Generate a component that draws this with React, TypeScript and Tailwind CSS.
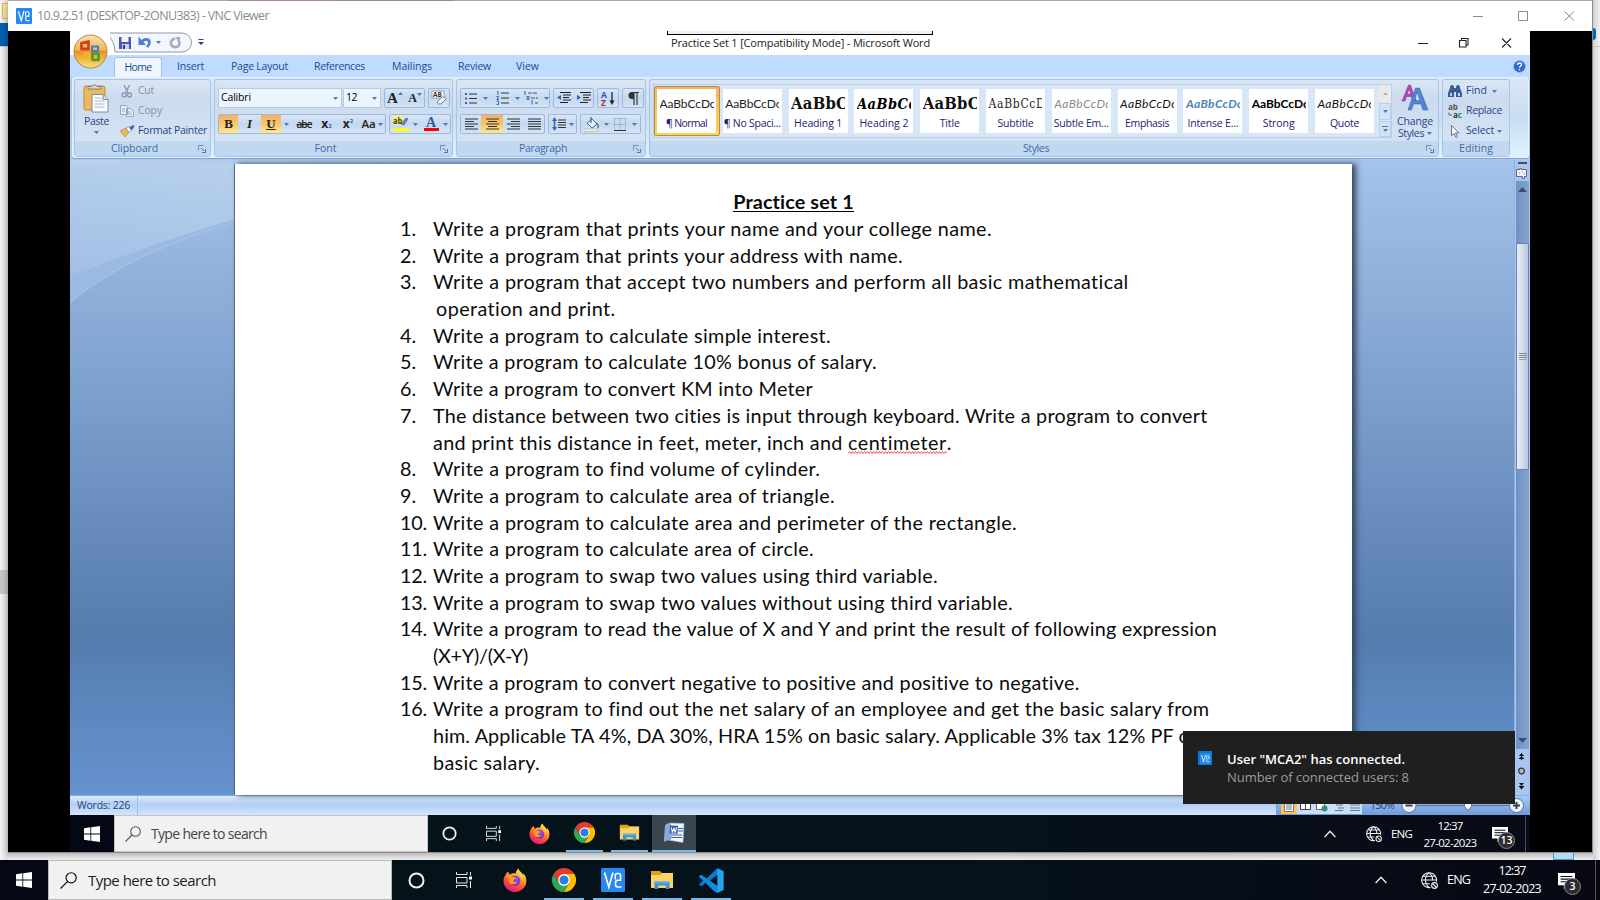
import React, { useLayoutEffect, useRef } from "react";

/** A single line of text whose tracking is computed so that it spans `w` pixels. */
function T({ w, className = "", children }: { w: number; className?: string; children: string }) {
  const ref = useRef<HTMLSpanElement>(null);
  useLayoutEffect(() => {
    const el = ref.current;
    if (!el) return;
    el.style.letterSpacing = "0px";
    const natural = el.getBoundingClientRect().width;
    el.style.letterSpacing = (w - natural) / children.length + "px";
  }, [w, children]);
  return (
    <span ref={ref} className={"inline-block whitespace-pre " + className}>
      {children}
    </span>
  );
}

const UI = "font-['Open_Sans','Noto_Sans',sans-serif]";

function Caret({ className = "" }: { className?: string }) {
  return (
    <svg className={"shrink-0 " + className} width="5" height="3" viewBox="0 0 5 3">
      <path d="M0 0h5L2.500 3z" fill="#4f78b5" />
    </svg>
  );
}

function VncIcon({ size, className = "" }: { size: number; className?: string }) {
  return (
    <svg className={"shrink-0 " + className} width={size} height={size} viewBox="0 0 24 24">
      <rect width="24" height="24" rx="1.500" fill="#2489f0" />
      <path d="M3.500 4.500l4.300 14.500L12 4.500" fill="none" stroke="#fff" strokeWidth="1.700" />
      <path d="M14.300 11.500V7.500q0-2 1.800-2h1.600q1.800 0 1.800 2v4.700h-2.700q-2.300 0-2.300 2.300v2.300q0 2.200 2.300 2.200h3.700" fill="none" stroke="#fff" strokeWidth="1.600" />
    </svg>
  );
}

function Firefox({ size }: { size: number }) {
  return (
    <svg width={size} height={size} viewBox="0 0 24 24">
      <defs>
        <linearGradient id="ffb" x1="0.8" y1="0" x2="0.300" y2="1">
          <stop offset="0" stopColor="#fff44f" />
          <stop offset="0.350" stopColor="#ffa52a" />
          <stop offset="0.650" stopColor="#ff5034" />
          <stop offset="1" stopColor="#e0128e" />
        </linearGradient>
        <radialGradient id="ffc" cx="0.6" cy="0.3" r="0.7">
          <stop offset="0" stopColor="#a24bff" />
          <stop offset="1" stopColor="#5b2fbf" />
        </radialGradient>
      </defs>
      <path d="M15.500 0.500c-2 1.600-2.600 3.200-2.700 5-3-0.800-5 0.200-5.800 1-1.200-0.600-1.600-2-1.500-3C3.800 4.500 3 5.600 2.600 6.700 1.200 8.600 0.500 10.700 0.500 13A11.400 11 0 0 0 23.400 13c0-3.500-1.200-6-3-7.700 0.200 1 0.200 1.500 0 2C19.600 4.600 16 3.500 15.500 0.500z" fill="url(#ffb)" />
      <circle cx="12.300" cy="12.800" r="5" fill="url(#ffc)" />
      <path d="M4 9c2-1.500 5-1.200 6.500 0.300 1.500-0.300 2.500 0.200 3 0.900-1 0.700-2.300 0.800-3 2-0.500 1.500 1.500 2.700 4 1.500-1.500 3.300-7 3.500-8.500 0C5.300 12.500 5.500 11 4 9z" fill="#ff9a24" />
      <path d="M15 5.500c3 1.500 4.500 4.500 3.800 8 2-3 1.200-7-3.800-8z" fill="#ffe14d" />
    </svg>
  );
}

function Chrome({ size }: { size: number }) {
  return (
    <svg width={size} height={size} viewBox="0 0 24 24">
      <path d="M1.600 6A12 12 0 0 0 12 24l5.200-9L12 12 6.800 15z" fill="#2da94f" />
      <path d="M22.400 6A12 12 0 0 1 12 24l5.200-9L12 12V6z" fill="#fdbd00" />
      <path d="M1.600 6L6.800 15 12 12V6h10.400A12 12 0 0 0 1.600 6z" fill="#e33b2e" />
      <circle cx="12" cy="12" r="5.900" fill="#fff" />
      <circle cx="12" cy="12" r="4.600" fill="#2f7de9" />
    </svg>
  );
}

function Explorer({ size }: { size: number }) {
  return (
    <svg width={size} height={size} viewBox="0 0 24 24">
      <path d="M1 3h9l2 2.500H1z" fill="#e5a100" />
      <path d="M1 5h22v15H1z" fill="#fdd26b" />
      <path d="M1 5h11l-1.500 2H1z" fill="#e5a100" />
      <path d="M4.500 21v-7.500h15V21h-3.700v-3.500h-7.500V21z" fill="#3c91d0" />
      <path d="M4.500 13.500h15v1.800h-15z" fill="#5fb2e8" />
    </svg>
  );
}

function WordIcon() {
  return (
    <svg width="22" height="22" viewBox="0 0 22 22">
      <path d="M6 1l15 0.500-1 19L5 18z" fill="#eef3fc" stroke="#9fb3dc" strokeWidth="0.6" />
      <path d="M2 3q3-2.500 6-2v17Q4 18 0.800 20z" fill="#8ea8dd" />
      <path d="M15 6.500h5M15 9h5M8 13h11M8 15.500h11" stroke="#3c5fae" strokeWidth="1.200" />
      <path d="M7 3.500l8 0.300-0.500 8-8-0.300z" fill="#3a5cb0" />
      <path d="M8.300 5.500l1 4.500 1.700-3.500 1 3.500 1.800-4.500" fill="none" stroke="#fff" strokeWidth="1.100" />
    </svg>
  );
}

function VsCode() {
  return (
    <svg width="25" height="25" viewBox="0 0 24 24">
      <path d="M17.500 0.300L23.500 3v18l-6 2.700L7 13.800l-4.600 3.600L0.300 16.300v-1L4 12 0.300 8.700v-1l2.100-1.100L7 10.200z" fill="#0a7ccb" />
      <path d="M17.500 0.300L23.500 3v18l-6 2.700z" fill="#25a4f1" />
      <path d="M17.500 6.800v10.400L10.600 12z" fill="#03131a" />
      <path d="M2.400 6.600L0.300 7.700v1l14.700 14 2.500 1V17.200z" fill="#1489d8" />
    </svg>
  );
}

function WinLogo({ size }: { size: number }) {
  return (
    <svg width={size} height={size} viewBox="0 0 16 16">
      <path d="M0 2.200l6.400-0.900v6.200H0zM7.200 1.200L16 0v7.500H7.200zM0 8.400h6.400v6.300L0 13.800zM7.200 8.400H16V16l-8.800-1.200z" fill="#fff" />
    </svg>
  );
}

function SearchGlyph({ color, size }: { color: string; size: number }) {
  return (
    <svg width={size} height={size} viewBox="0 0 16 16" fill="none" stroke={color} strokeWidth="1.100">
      <circle cx="10.500" cy="5.500" r="4.800" />
      <path d="M7 9L0.500 15.500" />
    </svg>
  );
}

function Cortana({ size }: { size: number }) {
  return (
    <svg width={size} height={size} viewBox="0 0 16 16">
      <circle cx="8" cy="8" r="6.600" fill="none" stroke="#f2f2f2" strokeWidth="1.900" />
    </svg>
  );
}

function TaskView({ size }: { size: number }) {
  return (
    <svg width={size} height={size} viewBox="0 0 16 16" fill="none" stroke="#e8e8e8" strokeWidth="1">
      <path d="M0.500 0v2.500h10.500V0M0.500 16v-2.500h10.500V16M0.500 5.500h10.500v5.500H0.500zM14.500 0v3.500M14.500 9v7" />
      <path d="M13 4.500h3v3h-3z" fill="#fff" stroke="none" />
    </svg>
  );
}

function Globe({ size }: { size: number }) {
  return (
    <svg width={size} height={size} viewBox="0 0 16 16" fill="none" stroke="#eee" strokeWidth="1.050">
      <path d="M9 14.600A7 7 0 1 1 14.500 9M0.700 7.500h14M1.800 4h11.500M1.800 11h6.500M7.500 0.600c-4.500 4-4.500 10 0 14M7.500 0.600c2.500 2 3.500 5 3.400 7.400" />
      <circle cx="12.700" cy="12.700" r="2.700" />
      <path d="M11 11l3.600 3.600" />
    </svg>
  );
}

function Notif({ size, n }: { size: number; n: string }) {
  return (
    <div className="relative shrink-0">
      <svg width={size} height={size} viewBox="0 0 16 16">
        <path d="M0 1h16v11.500H9L5.500 16v-3.500H0z" fill="#fff" />
        <path d="M2.500 4.200h11M2.500 6.700h11M2.500 9.200h7" stroke="#0a0c14" strokeWidth="1" />
      </svg>
      <div className="absolute left-[6px] top-[6px] flex h-[17px] w-[17px] items-center justify-center rounded-full border border-[#8a8a8a] bg-[#2b2b30] text-[10.500px] font-semibold leading-none text-white">
        {n}
      </div>
    </div>
  );
}

function Up() {
  return (
    <svg width="12" height="8" viewBox="0 0 12 8" fill="none" stroke="#eee" strokeWidth="1.300">
      <path d="M0.600 7L6 1.300 11.400 7" />
    </svg>
  );
}

/* ---------- Ribbon ---------- */

function Launcher() {
  return (
    <svg width="8" height="8" viewBox="0 0 8 8" fill="none" stroke="#6c91c2" strokeWidth="1">
      <path d="M0.500 5.500v-5h5" />
      <path d="M3 3l3 3" stroke="#54759f" />
      <path d="M4 7.500h3.500V4" stroke="#54759f" />
    </svg>
  );
}

function Group({ className, label, lw, launcher = true, children }: { className: string; label: string; lw: number; launcher?: boolean; children: React.ReactNode }) {
  return (
    <div className={"flex h-[78px] shrink-0 flex-col overflow-hidden rounded-[3px] border border-[#a9c5e6] bg-linear-to-b from-[#dbe6f4] from-0% via-[#cbdbee] via-25% to-[#d8e6f6] " + className}>
      <div className="h-[61px]">{children}</div>
      <div className="flex h-[15px] items-center bg-[#c1d8f0]">
        <div className="flex flex-1 justify-center text-[10.500px] leading-[15px] text-[#3e6aaa]">
          <T w={lw}>{label}</T>
        </div>
        {launcher && <div className="flex w-[16px] justify-center pr-px"><Launcher /></div>}
      </div>
    </div>
  );
}

const box = "flex h-[20px] shrink-0 items-center rounded-[2px] border border-[#9bb8de] bg-linear-to-b from-[#d8e6f7] via-[#c4d8f0] to-[#d5e4f6] ";

function Cell({ className, on = false, children }: { className: string; on?: boolean; children: React.ReactNode }) {
  return (
    <div className={"flex h-[18px] shrink-0 items-center justify-center gap-[4px] " + (on ? "bg-linear-to-b from-[#f6b15c] via-[#fcc46d] to-[#fde98f] " : "") + className}>
      {children}
    </div>
  );
}

function Lines({ d }: { d: string }) {
  return (
    <svg width="13" height="13" viewBox="0 0 13 13" fill="none" stroke="#333" strokeWidth="1.100">
      <path d={d} />
    </svg>
  );
}

function Clipboard() {
  return (
    <div className="flex h-full pl-[1px]">
      <div className="flex w-[41px] shrink-0 flex-col items-center pt-[4px] text-[10.500px] leading-[14px] text-[#1f4788]">
        <svg width="27" height="29" viewBox="0 0 27 29">
          <rect x="1" y="2" width="21" height="24" rx="2" fill="#edb95a" stroke="#c48a35" />
          <path d="M5 5h13V2.500h-4Q11.500-1 9 2.500H5z" fill="#d4d8de" stroke="#777" strokeWidth="0.900" />
          <path d="M9 10.500h11l5 5V28H9z" fill="#fdfdff" stroke="#7c8ba5" />
          <path d="M11.500 14h7M11.500 17h10M11.500 20h10M11.500 23h10" stroke="#a8b6cf" />
          <path d="M20 10.500v5h5" fill="#d5def0" stroke="#7c8ba5" />
        </svg>
        <div className="mt-px"><T w={25}>Paste</T></div>
        <Caret className="mt-[3px]" />
      </div>
      <div className="flex shrink-0 flex-col pl-[3px] pt-[1px] text-[10.500px]">
        <div className="flex h-[20px] items-center gap-[5px] pl-[1px] text-[#8d929b]">
          <svg width="12" height="13" viewBox="0 0 12 13" fill="none" stroke="#8598b3" strokeWidth="1.300"><path d="M3 0l4 8M8.500 0L4.500 8" /><circle cx="3" cy="10" r="2" /><circle cx="8.500" cy="10" r="2" /></svg>
          <T w={16}>Cut</T>
        </div>
        <div className="flex h-[20px] items-center gap-[4px] text-[#8d929b]">
          <svg width="14" height="12" viewBox="0 0 14 12" fill="#e8eef7" stroke="#94a8c4"><path d="M0.500 0.500h5l2 2v7h-7zM6.500 3.500h4l3 3v5h-7z" /><path d="M8 7h3M8 9h4M2 4h3M2 6h3" /></svg>
          <T w={24}>Copy</T>
        </div>
        <div className="flex h-[20px] items-center gap-[3px] text-[#1f4788]">
          <svg width="15" height="12" viewBox="0 0 15 12"><path d="M0 6l6-3 3 4-4 5z" fill="#e5bc55" stroke="#a88830" strokeWidth="0.6" /><path d="M6 3l3-1.500 2.500 3-2.500 3z" fill="#fff" stroke="#777" strokeWidth="0.6" /><path d="M9 2.500l4-2.500 1.500 1.500-3 4z" fill="#4a5fae" /></svg>
          <T w={69}>Format Painter</T>
        </div>
      </div>
    </div>
  );
}

function FontGroup() {
  const serif = "font-['Liberation_Serif',serif] font-bold text-[#222]";
  return (
    <div className="flex h-full flex-col gap-[6px] pl-[3px] pt-[8px]">
      <div className="flex h-[20px] items-center">
        <div className="flex h-[20px] w-[124px] items-center justify-between border border-[#b5cbe8] bg-[#ecf4fd] px-[2px] text-[10.500px] text-black"><T w={30}>Calibri</T><Caret className="mr-[1px]" /></div>
        <div className="ml-[1px] flex h-[20px] w-[38px] items-center justify-between border border-[#b5cbe8] bg-[#ecf4fd] px-[2px] text-[10.500px] text-black"><T w={11}>12</T><Caret className="mr-[1px]" /></div>
        <div className={box + "ml-[3px] w-[41px]"}>
          <Cell className={"w-[20px] text-[15px] leading-none " + serif}><span className="flex">A<Caret className="mt-[1px] rotate-180" /></span></Cell>
          <Cell className={"w-[20px] text-[12px] leading-none " + serif}><span className="flex items-end">A<Caret className="mb-[8px]" /></span></Cell>
        </div>
        <div className={box + "ml-[3px] w-[22px] justify-center"}>
          <svg width="16" height="16" viewBox="0 0 16 16"><rect x="1" y="1" width="12" height="7" fill="#fff" stroke="#777" strokeWidth="0.7" /><text x="2" y="7" fontSize="6.500" fontWeight="bold" fill="#333">AB</text><path d="M6 12l5-5q3-1 4 2l-5 5q-4 1-4-2z" fill="#f1f4fb" stroke="#6e7d9b" strokeWidth="0.900" /></svg>
        </div>
      </div>
      <div className="flex h-[20px] items-center">
        <div className={box + "w-[168px] text-[#222]"}>
          <Cell on className={"w-[19px] text-[13px] " + serif}>B</Cell>
          <Cell className="w-[23px] font-['Liberation_Serif',serif] text-[13px] font-bold italic">I</Cell>
          <Cell on className={"w-[20px] text-[13px] underline " + serif}>U</Cell>
          <Cell className="w-[11px]"><Caret /></Cell>
          <Cell className="w-[24px] text-[10px] font-semibold line-through"><T w={15}>abe</T></Cell>
          <Cell className="w-[21px] text-[12px] font-bold"><span className="flex leading-none">x<span className="mt-[5px] text-[6px] text-[#2f5fb5]">2</span></span></Cell>
          <Cell className="w-[22px] text-[12px] font-bold"><span className="flex leading-none">x<span className="text-[6px] text-[#2f5fb5]">2</span></span></Cell>
          <Cell className="w-[26px] text-[11.500px] font-semibold"><span className="flex items-center gap-[2px]"><T w={14}>Aa</T><Caret /></span></Cell>
        </div>
        <div className={box + "ml-[3px] w-[62px]"}>
          <Cell className="w-[31px]">
            <svg width="16" height="16" viewBox="0 0 16 16"><rect x="0" y="0" width="10" height="9" fill="#fbf36b" /><text x="0" y="8" fontSize="9" fontWeight="bold" fill="#333" textLength="9" lengthAdjust="spacingAndGlyphs">ab</text><path d="M8 8l5-6 2 1-4 6z" fill="#6f88b8" stroke="#445" strokeWidth="0.5" /><rect x="0" y="12" width="16" height="3" fill="#ff0" /></svg>
            <Caret />
          </Cell>
          <Cell className="w-[29px]">
            <svg width="15" height="16" viewBox="0 0 15 16"><text x="2" y="11" fontSize="14" fontWeight="bold" fontFamily="Liberation Serif" fill="#33589c">A</text><rect x="0" y="12" width="15" height="3" fill="#f00" /></svg>
            <Caret />
          </Cell>
        </div>
      </div>
    </div>
  );
}

function ParagraphGroup() {
  return (
    <div className="flex h-full flex-col gap-[6px] pl-[3px] pt-[8px]">
      <div className="flex h-[20px] items-center">
        <div className={box + "w-[90px]"}>
          <Cell className="w-[31px] gap-[6px]">
            <svg width="12" height="13" viewBox="0 0 12 13"><path d="M4 2h8M4 6.500h8M4 11h8" stroke="#333" /><path d="M0 1h2v2H0zM0 5.500h2v2H0zM0 10h2v2H0z" fill="#3465b5" /></svg><Caret />
          </Cell>
          <Cell className="w-[31px] gap-[6px]">
            <svg width="13" height="14" viewBox="0 0 13 14"><path d="M5 2h8M5 7h8M5 12h8" stroke="#333" /><path d="M1 0.500h1V4M0.500 5.500h2L1 8.500h2M0.500 10h2v3.500h-2" fill="none" stroke="#3465b5" /></svg><Caret />
          </Cell>
          <Cell className="w-[26px] gap-[1px]">
            <svg width="17" height="14" viewBox="0 0 17 14"><path d="M5 2h10M8 7h7M12 12h3" stroke="#555" strokeDasharray="4 1" /><path d="M1 0.500h1V4M4 5.500h2v3H4zM9 9v4.500" fill="none" stroke="#3465b5" /></svg><Caret />
          </Cell>
        </div>
        <div className={box + "ml-[3px] w-[41px]"}>
          <Cell className="w-[20px]"><svg width="14" height="12" viewBox="0 0 14 12"><path d="M3 0.500h11M6 3h8M6 5.500h6M6 8h8M3 10.500h8" stroke="#222" strokeWidth="1.200" /><path d="M4 3v5L0 5.500z" fill="#3465b5" /></svg></Cell>
          <Cell className="w-[20px]"><svg width="14" height="12" viewBox="0 0 14 12"><path d="M3 0.500h11M6 3h8M6 5.500h6M6 8h8M3 10.500h8" stroke="#222" strokeWidth="1.200" /><path d="M0 3v5l4-2.500z" fill="#3465b5" /></svg></Cell>
        </div>
        <div className={box + "ml-[3px] w-[22px] justify-center"}>
          <svg width="15" height="15" viewBox="0 0 15 15" fill="none"><text x="0" y="7" fontSize="8.500" fontWeight="bold" fill="#2f5fb5">A</text><text x="0" y="14.500" fontSize="8.500" fontWeight="bold" fill="#a33">Z</text><path d="M11 1v10" stroke="#222" strokeWidth="1.300" /><path d="M8.500 9.500h5L11 14z" fill="#222" /></svg>
        </div>
        <div className={box + "ml-[3px] w-[22px] justify-center"}>
          <svg width="11" height="13" viewBox="0 0 11 13"><path d="M5 0.500h6M6 0.500V13M9 0.500V13" stroke="#333" strokeWidth="1.200" /><path d="M6 0H4Q0.500 0.300 0.500 3.500T4 7h2z" fill="#333" /></svg>
        </div>
      </div>
      <div className="flex h-[20px] items-center">
        <div className={box + "w-[85px]"}>
          <Cell className="w-[20px]"><Lines d="M0 1h13M0 3.500h9M0 6h13M0 8.500h9M0 11h13" /></Cell>
          <Cell on className="w-[22px]"><Lines d="M0 1h13M2 3.500h9M0 6h13M2 8.500h9M0 11h13" /></Cell>
          <Cell className="w-[21px]"><Lines d="M0 1h13M4 3.500h9M0 6h13M4 8.500h9M0 11h13" /></Cell>
          <Cell className="w-[20px]"><Lines d="M0 1h13M0 3.500h13M0 6h13M0 8.500h13M0 11h13" /></Cell>
        </div>
        <div className={box + "ml-[3px] w-[29px] justify-center gap-[2px]"}>
          <svg width="15" height="14" viewBox="0 0 15 14"><path d="M6 3h8M6 5.500h8M6 8h8M6 10.500h8" stroke="#333" /><path d="M0 4l2.500-4L5 4H3.300v6H5l-2.500 4L0 10h1.700V4z" fill="#3465b5" /></svg><Caret />
        </div>
        <div className={box + "ml-[3px] w-[61px]"}>
          <Cell className="w-[30px]">
            <svg width="16" height="15" viewBox="0 0 16 15"><path d="M3 6l5-4 5 5-5 4z" fill="#e8eef8" stroke="#53688f" /><path d="M7 0v6M12 6q3 1 2 5" stroke="#53688f" strokeWidth="1.300" fill="none" /><path d="M0 12h14v2.500H0z" fill="#f6f1df" stroke="#999" strokeWidth="0.500" /></svg><Caret />
          </Cell>
          <Cell className="w-[29px] gap-[6px]">
            <svg width="12" height="13" viewBox="0 0 12 13" fill="none" stroke="#8291ab"><path d="M0.500 0.500h11v12M0.500 0.500v12M6 0.500v12M0.500 6.500h11" strokeDasharray="1 1" /><path d="M0 12.500h12" stroke="#333" /></svg><Caret />
          </Cell>
        </div>
      </div>
    </div>
  );
}

const STYLES = [
  { s: "AaBbCcDc", n: "¶ Normal", w: 41, c: "font-['Lato',sans-serif] text-[12px] text-[#222]", sw: 56 },
  { s: "AaBbCcDc", n: "¶ No Spaci...", w: 57, c: "font-['Lato',sans-serif] text-[12px] text-[#222]", sw: 56 },
  { s: "AaBbC", n: "Heading 1", w: 48, c: "font-['DejaVu_Serif_Condensed','DejaVu_Serif',serif] text-[16.500px] font-bold text-[#111]", sw: 57 },
  { s: "AaBbCc", n: "Heading 2", w: 49, c: "font-['DejaVu_Serif_Condensed','DejaVu_Serif',serif] text-[14.500px] font-bold italic text-black", sw: 60 },
  { s: "AaBbC", n: "Title", w: 20, c: "font-['DejaVu_Serif_Condensed','DejaVu_Serif',serif] text-[16.500px] font-bold text-[#111]", sw: 57 },
  { s: "AaBbCcD", n: "Subtitle", w: 36, c: "font-['DejaVu_Serif_Condensed','DejaVu_Serif',serif] text-[12px] text-[#222]", sw: 57 },
  { s: "AaBbCcDc", n: "Subtle Em...", w: 55, c: "font-['Lato',sans-serif] text-[12px] italic text-[#8a8a8a]", sw: 57 },
  { s: "AaBbCcDc", n: "Emphasis", w: 44, c: "font-['Lato',sans-serif] text-[12px] italic text-[#111]", sw: 57 },
  { s: "AaBbCcDc", n: "Intense E...", w: 51, c: "font-['Lato',sans-serif] text-[12px] font-bold italic text-[#4f81bd]", sw: 57 },
  { s: "AaBbCcDc", n: "Strong", w: 32, c: "font-['Lato',sans-serif] text-[12px] font-bold text-black", sw: 57 },
  { s: "AaBbCcDc", n: "Quote", w: 29, c: "font-['Lato',sans-serif] text-[12px] italic text-[#111]", sw: 57 },
];

function StylesGroup() {
  return (
    <div className="flex h-full pl-[3px] pt-[4px]">
      <div className="flex h-[54px] w-[739px] border border-[#b7cfec] bg-[#d8e7f8]">
        <div className="flex w-[725px] items-start pt-px">
          {STYLES.map((st, i) => (
            <div key={i} className={"flex h-[50px] w-[65.800px] shrink-0 " + (i === 0 ? "rounded-[2px] border border-[#b98a4a] bg-linear-to-b from-[#f3b56c] to-[#fbd64f] p-[2px]" : "p-[3px]")}>
              <div className="flex h-[44px] w-[59px] flex-col items-center bg-white">
                <div className="mt-[3px] flex h-[24px] w-[54px] items-center overflow-hidden">
                  <T w={st.sw} className={"leading-[24px] " + st.c}>{st.s}</T>
                </div>
                <div className="flex h-[15px] justify-center whitespace-nowrap text-[10.500px] leading-[15px] text-[#1b2170]">
                  <T w={st.w}>{st.n}</T>
                </div>
              </div>
            </div>
          ))}
        </div>
        <div className="flex w-[12px] flex-col gap-[1px]">
          <div className="flex h-[17px] items-center justify-center bg-[#eceae8]"><svg width="5" height="3" viewBox="0 0 5 3"><path d="M0 3h5L2.500 0z" fill="#b0b0b0" /></svg></div>
          <div className="flex h-[17px] items-center justify-center border border-[#b7cfec] bg-[#d3e2f8]"><Caret /></div>
          <div className="flex h-[16px] flex-col items-center justify-center gap-[2px] border border-[#b7cfec] bg-[#d3e2f8]"><div className="h-px w-[6px] bg-[#4f78b5]" /><Caret /></div>
        </div>
      </div>
      <div className="flex w-[46px] flex-col items-center text-[10.500px] leading-[12px] text-[#1f4788]">
        <svg width="28" height="28" viewBox="0 0 28 28">
          <path d="M1 17L7.500 1h2L15 17h-3l-1.500-4.500H5.500L4 17zM6.200 10h3.600L8.200 5z" fill="#b548b5" stroke="#7d3291" strokeWidth="0.500" />
          <path d="M7 26L14.500 4h4L27 26h-5l-2-6h-7.500l-2 6zM13.500 16.500h5.500L16.200 8z" fill="#4f86d6" stroke="#345f9f" strokeWidth="0.500" />
        </svg>
        <div className="mt-[3px]"><T w={36}>Change</T></div>
        <div className="flex items-center gap-[3px]"><T w={26}>Styles</T><Caret /></div>
      </div>
    </div>
  );
}

function EditingGroup() {
  return (
    <div className="flex h-full flex-col pl-[5px] pt-[1px] text-[10.500px] text-[#1f4788]">
      <div className="flex h-[20px] items-center gap-[4px]">
        <svg width="14" height="12" viewBox="0 0 14 12"><path d="M2 3q0-3 2-3t2 3h2q0-3 2-3t2 3l2 5v4H8V7H6v5H0V8z" fill="#3c5c93" /><path d="M2 8h2v3H2zM10 8h2v3h-2z" fill="#b8cdf0" /></svg>
        <T w={21}>Find</T><Caret className="ml-px" />
      </div>
      <div className="flex h-[20px] items-center gap-[3px]">
        <svg width="15" height="14" viewBox="0 0 15 14"><text x="0" y="6" fontSize="8" fontWeight="bold" fill="#555">ab</text><text x="5" y="13.500" fontSize="8" fontWeight="bold" fill="#333">a<tspan fill="#2c8f3a">c</tspan></text><path d="M1 8.500v2.500h3" stroke="#3465b5" fill="none" /></svg>
        <T w={36}>Replace</T>
      </div>
      <div className="flex h-[20px] items-center gap-[6px] pl-[3px]">
        <svg width="9" height="13" viewBox="0 0 9 13"><path d="M0.500 0.500v10l2.500-2 2 4 1.500-0.800L4.500 8h3.500z" fill="#fff" stroke="#53688f" strokeWidth="0.900" /></svg>
        <T w={28}>Select</T><Caret className="-ml-[3px]" />
      </div>
    </div>
  );
}

/* ---------- Document ---------- */

type Line = { n?: string; t: string; w: number; indent?: boolean };
const DOC: Line[] = [
  { n: "1.", t: "Write a program that prints your name and your college name.", w: 559 },
  { n: "2.", t: "Write a program that prints your address with name.", w: 470 },
  { n: "3.", t: "Write a program that accept two numbers and perform all basic mathematical", w: 696 },
  { t: "operation and print.", w: 180, indent: true },
  { n: "4.", t: "Write a program to calculate simple interest.", w: 398 },
  { n: "5.", t: "Write a program to calculate 10% bonus of salary.", w: 444 },
  { n: "6.", t: "Write a program to convert KM into Meter", w: 380 },
  { n: "7.", t: "The distance between two cities is input through keyboard. Write a program to convert", w: 775 },
  { t: "and print this distance in feet, meter, inch and ", w: 415 },
  { n: "8.", t: "Write a program to find volume of cylinder.", w: 387 },
  { n: "9.", t: "Write a program to calculate area of triangle.", w: 402 },
  { n: "10.", t: "Write a program to calculate area and perimeter of the rectangle.", w: 584 },
  { n: "11.", t: "Write a program to calculate area of circle.", w: 381 },
  { n: "12.", t: "Write a program to swap two values using third variable.", w: 505 },
  { n: "13.", t: "Write a program to swap two values without using third variable.", w: 580 },
  { n: "14.", t: "Write a program to read the value of X and Y and print the result of following expression", w: 784 },
  { t: "(X+Y)/(X-Y)", w: 95 },
  { n: "15.", t: "Write a program to convert negative to positive and positive to negative.", w: 648 },
  { n: "16.", t: "Write a program to find out the net salary of an employee and get the basic salary from", w: 776 },
  { t: "him. Applicable TA 4%, DA 30%, HRA 15% on basic salary. Applicable 3% tax 12% PF on", w: 768 },
  { t: "basic salary.", w: 107 },
];

function DocumentArea() {
  return (
    <div className="relative flex h-[631px] bg-linear-to-b from-[#a4c2ea] from-0% via-[#557cae] via-75% to-[#6593cf]">
      <svg className="absolute left-0 top-0" width="165" height="150" viewBox="0 0 165 150">
        <defs>
          <linearGradient id="sky" x1="0.4" y1="0" x2="0.2" y2="1">
            <stop offset="0" stopColor="#b5cfec" />
            <stop offset="1" stopColor="#a3bfe5" />
          </linearGradient>
        </defs>
        <path d="M0 0h165v58Q60 90 0 139z" fill="#9cbae1" />
        <path d="M165 58.500Q60 88 0 138.500" fill="none" stroke="#a5c0e3" strokeWidth="1.500" />
        <path d="M0 0h165v55Q80 80 0 113z" fill="url(#sky)" />
      </svg>
      <div className="w-[164px] shrink-0" />
      <div className="relative h-[631px] w-[1118px] shrink-0 border-l border-[#5f6a78] bg-white pl-[165px] pt-[24px] font-['Lato',sans-serif] text-[19.800px] text-[#0c0c0c] shadow-[4px_0_6px_0px_#33465f]">
        <div className="flex h-[27px] w-[787px] justify-center font-bold leading-[27px]">
          <T w={121} className="h-[24px] border-b-[1.500px] border-black leading-[27px]">Practice set 1</T>
        </div>
        {DOC.map((l, i) => (
          <div key={i} className="flex h-[26.700px] leading-[27px]">
            <div className="w-[33px] shrink-0">{l.n && <T w={l.n.length === 3 ? 27 : 16}>{l.n}</T>}</div>
            <div className={"flex shrink-0 whitespace-pre " + (l.indent ? "pl-[3px]" : "")}>
              <T w={l.w}>{l.t}</T>
              {i === 8 && (
                <span className="flex">
                  <span className="relative">
                    <T w={99}>centimeter</T>
                    <svg className="absolute left-0 top-[22px]" width="99" height="3" viewBox="0 0 99 3"><path d={"M0 2.500" + Array.from({ length: 33 }, () => "l1.500-2l1.500 2").join("")} fill="none" stroke="#f22" strokeWidth="0.800" /></svg>
                  </span>
                  .
                </span>
              )}
            </div>
          </div>
        ))}
      </div>
      <div className="flex-1" />
      <div className="relative -mt-[4px] flex w-[16px] flex-col items-center border-l border-[#8fb2e2] bg-[#a6c5f1]">
        <div className="mt-[2px] h-[2px] w-[9px] shrink-0 bg-[#454d66]" />
        <svg className="mr-px mt-[4px] shrink-0" width="12" height="11" viewBox="0 0 12 11"><path d="M0.500 1.500h3v-1h2v1h5v7h-2v2h-2v-2h-6z" fill="#f3f0f5" stroke="#5b6680" /><path d="M3 5h1M6 4h1M8 6h1" stroke="#a07a8a" /></svg>
        <div className="mt-[2px] flex h-[568px] w-[13px] shrink-0 flex-col items-center bg-linear-to-r from-[#6f92c2] to-[#84a4d0]">
          <svg className="mt-[6px] shrink-0" width="9" height="5" viewBox="0 0 9 5"><path d="M0 5h9L4.500 0z" fill="#424a72" /></svg>
          <div className="mt-[51px] flex h-[227px] w-[13px] shrink-0 flex-col items-center justify-center gap-px rounded-[1px] border border-[#6b82ae] bg-linear-to-r from-[#e9eef6] via-[#d3dcea] to-[#b7c7df]">
            <div className="h-px w-[8px] bg-[#7d8b97]" />
            <div className="h-px w-[8px] bg-[#7d8b97]" />
            <div className="h-px w-[8px] bg-[#7d8b97]" />
            <div className="h-px w-[8px] bg-[#9aa8b4]" />
          </div>
          <div className="flex-1" />
          <svg className="mb-[6px] shrink-0" width="9" height="5" viewBox="0 0 9 5"><path d="M0 0h9L4.500 5z" fill="#424a72" /></svg>
        </div>
        <svg className="mr-[2px] mt-[4px] shrink-0" width="7" height="37" viewBox="0 0 7 37"><path d="M3.500 0L6 3H1zM3.500 3L6.500 6h-6zM3 5h1v2H3zM1 30h5l-2.500 3zM0.500 33h6l-3 3.500z" fill="#111" /><circle cx="3.500" cy="18" r="2.800" fill="#bbb" stroke="#333" strokeWidth="1.200" /></svg>
      </div>
    </div>
  );
}

function StatusBar() {
  return (
    <div className="flex h-[20px] shrink-0 items-stretch border-t border-[#8caedb] bg-linear-to-b from-[#dce9fa] from-0% via-[#b3cff4] via-45% to-[#d4e5fb] text-[10.500px] text-[#1f3f7c]">
      <div className="flex w-[68px] items-center border-r border-[#9dbce6] pl-[7px]"><T w={53}>Words: 226</T></div>
      <div className="flex-1" />
      <div className="flex w-[254px] items-center border-l border-[#7ba0d4] bg-linear-to-b from-[#a9c8f1] to-[#6f9bd8] pl-[4px]">
        <div className="flex h-[17px] items-center gap-[1px] bg-[#c9def8]">
          <div className="flex h-[17px] w-[16px] items-center justify-center bg-[#fbc45e]"><svg width="10" height="12" viewBox="0 0 10 12"><path d="M0.500 0.500h9v11h-9zM2 3h6M2 5h6M2 7h6M2 9h6" fill="#fff" stroke="#777" /></svg></div>
          <div className="flex w-[15px] justify-center"><svg width="11" height="11" viewBox="0 0 11 11"><path d="M0.500 1.500h5v8h-5zM5.500 1.500h5v8h-5z" fill="#fff" stroke="#444" /></svg></div>
          <div className="flex w-[16px] justify-center"><svg width="12" height="12" viewBox="0 0 12 12"><path d="M0.500 1.500h8v8h-8z" fill="#fff" stroke="#667" /><circle cx="8.500" cy="8.500" r="3" fill="#2f8f78" /></svg></div>
          <div className="flex w-[15px] justify-center"><svg width="10" height="12" viewBox="0 0 10 12"><path d="M0 2h7M2 5h7M4 8h6M1 10.500h8" stroke="#678" /></svg></div>
          <div className="flex w-[15px] justify-center"><svg width="10" height="12" viewBox="0 0 10 12"><path d="M0 2h10M0 5h10M0 8h10M0 10.500h10" stroke="#678" /></svg></div>
        </div>
        <div className="ml-[8px]"><T w={24}>150%</T></div>
        <svg className="ml-[7px]" width="124" height="17" viewBox="0 0 124 17"><path d="M15 8.500h94" stroke="#5072a8" /><circle cx="8" cy="8.500" r="7" fill="#eef3fb" stroke="#57739f" /><path d="M4.500 8.500h7" stroke="#345" strokeWidth="2" /><path d="M63.500 3h7v6.500l-3.500 4-3.500-4z" fill="#f4f7fb" stroke="#57739f" /><circle cx="115.500" cy="8.500" r="7" fill="#eef3fb" stroke="#57739f" /><path d="M112 8.500h7M115.500 5v7" stroke="#345" strokeWidth="2" /></svg>
      </div>
    </div>
  );
}

function InnerTaskbar() {
  return (
    <div className="flex h-[37px] shrink-0 bg-linear-to-r from-[#03121a] from-0% via-[#06121a] via-60% to-[#080a16]">
      <div className="flex w-[44px] items-center justify-center bg-[#040814]"><WinLogo size={16} /></div>
      <div className="flex w-[314px] items-center border border-[#c5c5c5] bg-[#f1f1f1] pl-[10px] text-[#454545]">
        <SearchGlyph color="#555" size={16} />
        <div className="ml-[10px] text-[14px]"><T w={116}>Type here to search</T></div>
      </div>
      <div className="flex w-[43px] items-center justify-center"><Cortana size={15} /></div>
      <div className="flex w-[44px] items-center justify-center pl-px"><TaskView size={15} /></div>
      <div className="flex w-[49px] items-center justify-center"><Firefox size={21} /></div>
      <div className="ml-[2px] flex w-[37px] items-center justify-center border-b-2 border-[#76b9ed]"><Chrome size={21} /></div>
      <div className="ml-[8px] flex w-[37px] items-center justify-center border-b-2 border-[#76b9ed]"><Explorer size={21} /></div>
      <div className="ml-[4px] flex w-[44px] items-center justify-center border-b-2 border-[#76b9ed] bg-[#3a464e]"><WordIcon /></div>
      <div className="flex-1" />
      <div className="flex items-center text-white">
        <Up />
        <div className="ml-[30px] flex"><Globe size={16} /></div>
        <div className="ml-[9px] text-[11.500px]"><T w={21}>ENG</T></div>
        <div className="ml-[11px] flex w-[54px] flex-col items-center text-[11.500px] leading-[17px]"><T w={25}>12:37</T><T w={53}>27-02-2023</T></div>
        <div className="ml-[15px]"><Notif size={16} n="13" /></div>
        <div className="ml-[17px] h-[36px] w-px bg-[#4b4d57]" />
        <div className="w-[4px]" />
      </div>
    </div>
  );
}

function Taskbar() {
  return (
    <div className={"flex h-[40px] bg-linear-to-r from-[#03121a] from-0% via-[#06121a] via-60% to-[#070814] " + UI}>
      <div className="flex w-[48px] items-center justify-center bg-[#040814]"><WinLogo size={16} /></div>
      <div className="flex w-[344px] items-center border border-[#b9b9b9] bg-[#f1f1f1] pl-[11px] text-[#1c1c1c]">
        <SearchGlyph color="#111" size={17} />
        <div className="ml-[11px] text-[15px]"><T w={128}>Type here to search</T></div>
      </div>
      <div className="flex w-[48px] items-center justify-center"><Cortana size={17} /></div>
      <div className="flex w-[48px] items-center justify-center"><TaskView size={16} /></div>
      <div className="flex w-[54px] items-center justify-center"><Firefox size={24} /></div>
      <div className="ml-[2px] flex w-[40px] items-center justify-center border-b-2 border-[#76b9ed] pt-[2px]"><Chrome size={24} /></div>
      <div className="ml-[9px] flex w-[40px] items-center justify-center border-b-2 border-[#76b9ed] pt-[2px]"><VncIcon size={24} /></div>
      <div className="ml-[9px] flex w-[40px] items-center justify-center border-b-2 border-[#76b9ed] pt-[2px]"><Explorer size={24} /></div>
      <div className="ml-[9px] flex w-[40px] items-center justify-center border-b-2 border-[#76b9ed] pt-[2px]"><VsCode /></div>
      <div className="flex-1" />
      <div className="flex items-center text-white">
        <Up />
        <div className="ml-[34px] flex"><Globe size={17} /></div>
        <div className="ml-[9px] text-[12.500px]"><T w={23}>ENG</T></div>
        <div className="ml-[12px] flex w-[60px] flex-col items-center text-[12.500px] leading-[18px]"><T w={27}>12:37</T><T w={58}>27-02-2023</T></div>
        <div className="ml-[16px]"><Notif size={17} n="3" /></div>
        <div className="ml-[20px] h-[40px] w-px bg-[#55575f]" />
        <div className="w-[4px]" />
      </div>
    </div>
  );
}

const TABS = [
  { t: "Insert", w: 27, c: "ml-[15px]" },
  { t: "Page Layout", w: 57, c: "ml-[27px]" },
  { t: "References", w: 51, c: "ml-[26px]" },
  { t: "Mailings", w: 40, c: "ml-[27px]" },
  { t: "Review", w: 33, c: "ml-[26px]" },
  { t: "View", w: 23, c: "ml-[25px]" },
];

function WordWindow() {
  return (
    <div className="relative flex w-[1460px] flex-col bg-white">
      <div className="flex h-[24px] shrink-0 justify-between">
        <div className="flex pl-[40px]">
          <svg width="128" height="24" viewBox="0 0 128 24">
            <path d="M-6 2h76a9.500 9.500 0 0 1 0 19H3Q3 10-6 2z" transform="translate(2 0)" fill="#f3f6fb" stroke="#8d99ad" />
            <path d="M9 6h12v12H9z" fill="#4a55b5" /><path d="M11.500 6h7v5h-7z" fill="#f4f6fc" /><path d="M12 13h7v5h-7z" fill="#c9d0ea" /><path d="M13 14h2v4h-2z" fill="#333c88" />
            <path d="M31 12q3-5 7.500-3 2.500 3-1.500 7" fill="none" stroke="#4d7fd0" strokeWidth="2.800" /><path d="M28.500 5.500v8.500h7.500z" fill="#4d7fd0" />
            <path d="M46 10h5l-2.500 3z" fill="#4f78b5" />
            <path d="M65 7.500q-5 1.500-4 6 2.500 4 7 2 3-3 0-7" fill="none" stroke="#a2afc2" strokeWidth="2.600" /><path d="M65 6h5v5.500z" fill="#a2afc2" />
            <path d="M88.500 8.500h5" stroke="#223f77" /><path d="M88 11h6l-3 3z" fill="#223f77" />
          </svg>
        </div>
        <div className="mr-[18px] flex items-center text-[#222]">
          <svg width="94" height="10" viewBox="0 0 94 10" fill="none" stroke="#222" strokeWidth="1.100">
            <path d="M0 5.500h10M41.500 2.500h6.500v6.500h-6.500zM43.500 2.500v-2h6.500v6.500h-2M84 0.500l9 9M93 0.500l-9 9" />
          </svg>
        </div>
      </div>
      {/* Caption and the edge of the remote viewer's pull-down bar */}
      <div className="absolute left-[597px] top-0 flex h-[24px] w-[266px] flex-col items-center text-[11px] text-[#222]">
        <div className="h-[4px] w-full shrink-0 border border-t-0 border-black bg-[#efefef]" />
        <div className="flex h-[17px] items-center pl-px"><T w={259}>Practice Set 1 [Compatibility Mode] - Microsoft Word</T></div>
      </div>
      {/* Office button */}
      <svg className="absolute left-[3px] top-[3px]" width="36" height="36" viewBox="0 0 36 36">
        <defs>
          <linearGradient id="orb" x1="0" y1="0" x2="0" y2="1">
            <stop offset="0" stopColor="#fde3b0" /><stop offset="0.450" stopColor="#f2b552" /><stop offset="0.500" stopColor="#e89420" /><stop offset="1" stopColor="#fde277" />
          </linearGradient>
        </defs>
        <circle cx="17.500" cy="17.500" r="16.500" fill="url(#orb)" stroke="#b9863f" />
        <path d="M8.500 9l7-1.500v7.500h-7z" fill="none" stroke="#d8401c" strokeWidth="2.800" strokeLinejoin="round" />
        <path d="M19 12.500h6v4.500h-6z" fill="none" stroke="#3f7fd0" strokeWidth="2" strokeLinejoin="round" />
        <path d="M11.500 19h4.500v6h-4.500z" fill="none" stroke="#f6b828" strokeWidth="2" strokeLinejoin="round" />
        <path d="M19.500 19.500h6v6.500h-6z" fill="none" stroke="#4f9a2c" strokeWidth="2.600" strokeLinejoin="round" />
      </svg>
      <div className="flex h-[22px] shrink-0 items-center bg-[#bfdbff] pl-[44px] pr-[4px] text-[10.500px] text-[#1d4a93]">
        <div className="mt-[2px] flex h-[20px] w-[48px] items-center justify-center rounded-t-[3px] border border-b-0 border-[#a2c0ea] bg-[#eef5fd]"><T w={27}>Home</T></div>
        {TABS.map((t) => (
          <div key={t.t} className={"pt-[2px] " + t.c}><T w={t.w}>{t.t}</T></div>
        ))}
        <div className="flex-1" />
        <svg width="13" height="13" viewBox="0 0 13 13"><circle cx="6.500" cy="6.500" r="6" fill="#2f66cf" stroke="#9fb8e6" /><path d="M4.500 5q0-2 2-2t2 1.700q0 1-1.200 1.600-0.800 0.400-0.800 1.400M6.500 9v1.300" stroke="#fff" strokeWidth="1.300" fill="none" /></svg>
      </div>
      <div className="flex h-[83px] shrink-0 bg-[#b3cdee]">
        <div className="ml-[2px] flex h-[81px] w-[1457px] gap-[3px] rounded-[3px] border border-b-2 border-[#e3f3fb] bg-linear-to-b from-[#dbe7f5] via-[#c9ddf3] to-[#def2fc] pl-px pt-px shadow-[0_1px_1px_#7d9fcb]">
          <Group className="w-[137px]" label="Clipboard" lw={47}><Clipboard /></Group>
          <Group className="w-[239px]" label="Font" lw={22}><FontGroup /></Group>
          <Group className="w-[190px]" label="Paragraph" lw={48}><ParagraphGroup /></Group>
          <Group className="w-[790px]" label="Styles" lw={26}><StylesGroup /></Group>
          <Group className="w-[68px]" label="Editing" lw={34} launcher={false}><EditingGroup /></Group>
        </div>
      </div>
      <div className="h-[4px] shrink-0 bg-linear-to-r from-[#b9d2ef] from-0% via-[#a4c2ea] via-30% to-[#a4c2ea]" />
      <DocumentArea />
      <StatusBar />
      <InnerTaskbar />
    </div>
  );
}

export default function App() {
  return (
    <div className={"relative flex h-[900px] w-[1600px] flex-col overflow-hidden bg-[#f3f3f3] " + UI}>
      <div className="flex h-[860px] shrink-0">
        <div className="flex w-[8px] shrink-0 flex-col bg-linear-to-r from-[#f6f6f6] to-[#e2e2e2]">
          <div className="ml-[2px] mt-[3px] h-[16px] border border-r-0 border-[#dcb95a] bg-[#fbe7a4]" />
          <div className="mt-[4px] h-[23px] bg-[#0062b1]" />
          <div className="h-px bg-[#c9c9c9]" />
          <div className="mt-[523px] h-[24px] bg-[#c8c8c8]" />
        </div>
        <div className="flex w-[1585px] shrink-0 flex-col">
          <div className="flex h-[853px] flex-col border-b border-r border-[#8c8c8c] bg-white shadow-[0_2px_8px_#00000066]">
            <div className="flex h-px bg-[#a8a8a8]">
              <div className="ml-[221px] w-[104px] bg-[#b08a80]" />
              <div className="w-[121px] bg-[#9d85a6]" />
            </div>
            <div className="flex h-[30px] shrink-0 items-center pl-[8px] text-[#8b8b8b]">
              <VncIcon size={16} />
              <div className="ml-[5px] text-[12.500px]"><T w={232}>10.9.2.51 (DESKTOP-2ONU383) - VNC Viewer</T></div>
              <div className="flex-1" />
              <svg className="mr-[17px]" width="102" height="10" viewBox="0 0 102 10" fill="none" stroke="#8a8a8a">
                <path d="M0 5.500h10M45.500 0.500h9v9h-9zM91.500 0.500l9.500 9M101 0.500l-9.500 9" />
              </svg>
            </div>
            <div className="flex flex-1 justify-center bg-black">
              <WordWindow />
            </div>
          </div>
          <div className="relative h-[7px] overflow-hidden bg-linear-to-b from-[#bdbdbd] to-[#f0f0f0]">
            <div className="-mt-[11px] flex gap-[24px] pl-[6px] text-[12px] leading-[14px] text-[#334a66]"><T w={42}>21 items</T><T w={120}>1 item selected  4.25 KB</T></div>
            <div className="absolute right-[19px] top-0 h-[7px] w-[21px] border border-t-0 border-[#3aa0cf] bg-[#b9dcec]" />
          </div>
        </div>
        <div className="flex flex-1 flex-col bg-linear-to-r from-[#cfcfcf] to-[#f3f3f3]">
          <div className="mt-[28px] h-[12px] w-[3px] rounded-r-full bg-[#0067b8]" />
          <div className="mt-[6px] h-px bg-[#c4c4c4]" />
        </div>
      </div>
      <Taskbar />
      {/* Connection toast */}
      <div className="absolute left-[1183px] top-[731px] flex h-[73px] w-[332px] bg-[#1f1f1f] pl-[15px] pt-[20px]">
        <div className="flex h-[14px] w-[14px] items-center justify-center bg-[#0a78d6]"><VncIcon size={11} /></div>
        <div className="ml-[15px] flex flex-col text-[13px] leading-[18px]">
          <div className="-mt-[1px] h-[18px] font-semibold text-white"><T w={178}>User "MCA2" has connected.</T></div>
          <div className="text-[#9c9c9c]"><T w={182}>Number of connected users: 8</T></div>
        </div>
      </div>
    </div>
  );
}
